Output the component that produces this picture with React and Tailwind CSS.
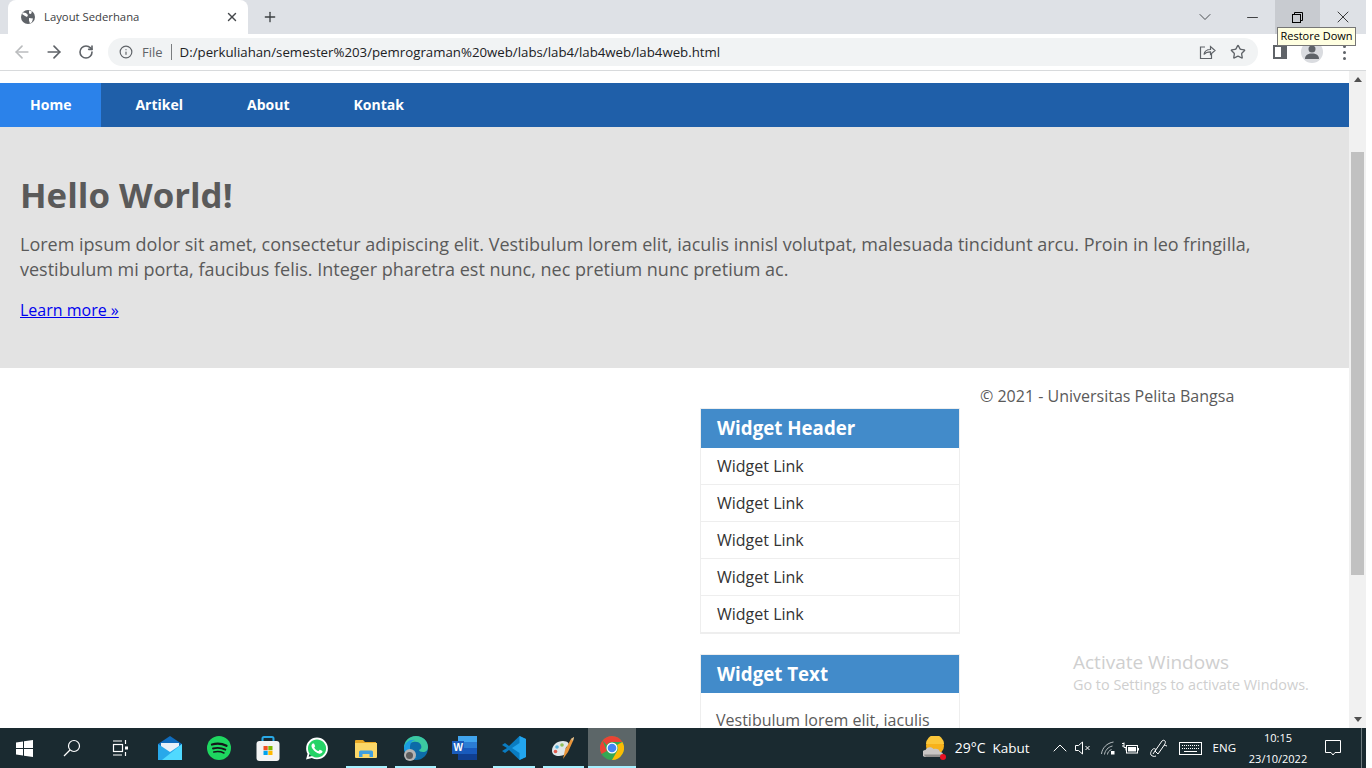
import { ArrowLeft, ArrowRight, ChevronDown, ChevronUp, Info, Minus, Plus, RotateCw, Star, X } from 'lucide-react';
import { FaWhatsapp } from 'react-icons/fa';

const openSans = "font-['Open_Sans',sans-serif]";

function Globe() {
  return (
    <svg width="16" height="16" viewBox="0 0 16 16">
      <circle cx="8" cy="8" r="7" fill="#5f6368" />
      <path d="M3 3.5l3 .5 2 2-1 2-2-1-3-2zM9 1.5l3 1-1 2.5-2-.5zM9 9l4 .5-1 3.5-2 1.5-1-3z" fill="#fff" />
    </svg>
  );
}

function Share() {
  return (
    <svg width="18" height="18" viewBox="0 0 18 18" fill="none" stroke="#5f6368" strokeWidth="1.2">
      <path d="M7 4H2.5v11.5h11V11" />
      <path d="M6 11.5c.5-3.5 3-5 6.5-5V3.5L17 7.5l-4.5 4V8.8c-3 0-5 .7-6.5 2.7z" />
    </svg>
  );
}

function WinLogo() {
  return (
    <svg width="17" height="17" viewBox="0 0 17 17" fill="#fff">
      <path d="M0 2.5l7-1V8H0zM8 1.3L17 0v8H8zM0 9h7v6.5l-7-1zM8 9h9v8l-9-1.3z" />
    </svg>
  );
}

function SearchIcon() {
  return (
    <svg width="18" height="18" viewBox="0 0 18 18" fill="none" stroke="#fff" strokeWidth="1.2">
      <circle cx="11" cy="7" r="5.5" />
      <path d="M7 11l-6 6" />
    </svg>
  );
}

function TaskView() {
  return (
    <svg width="17" height="16" viewBox="0 0 17 16" fill="none" stroke="#fff" strokeWidth="1.2">
      <path d="M1 1h9M1 15h9M13.5 0v4M13.5 12v4" />
      <rect x="1.5" y="4.5" width="9" height="7" />
      <rect x="13" y="6.5" width="3" height="3" fill="#fff" stroke="none" />
    </svg>
  );
}

function Mail() {
  return (
    <svg width="24" height="24" viewBox="0 0 24 24">
      <path d="M0 8L12 0l12 8v16H0z" fill="#0f6cbd" />
      <path d="M3 7h18v8l-9 5-9-5z" fill="#e8f1f8" />
      <path d="M0 8l12 8 12-8v16H0z" fill="#28a8ea" />
      <path d="M24 8v16H4z" fill="#50d9ff" />
    </svg>
  );
}

function Spotify() {
  return (
    <svg width="24" height="24" viewBox="0 0 24 24" fill="none" stroke="#14171a" strokeLinecap="round">
      <circle cx="12" cy="12" r="12" fill="#1ed760" stroke="none" />
      <path d="M5 8.5c5-1.4 10-1 14.5 1.3" strokeWidth="2.3" />
      <path d="M6 12.5c4.5-1.1 8.5-.7 12.3 1.2" strokeWidth="1.9" />
      <path d="M6.8 16c3.7-.8 7-.5 10.2 1" strokeWidth="1.5" />
    </svg>
  );
}

function Store() {
  return (
    <svg width="24" height="25" viewBox="0 0 24 25">
      <path d="M6.5 6V2.5A1.5 1.5 0 0 1 8 1h8a1.5 1.5 0 0 1 1.5 1.5V6" fill="none" stroke="#29a9e6" strokeWidth="2" />
      <rect x="0.5" y="5" width="23" height="20" rx="3" fill="#f4f4f4" />
      <rect x="7.5" y="10" width="4.2" height="4.2" fill="#f25022" />
      <rect x="12.3" y="10" width="4.2" height="4.2" fill="#7fba00" />
      <rect x="7.5" y="14.8" width="4.2" height="4.2" fill="#00a4ef" />
      <rect x="12.3" y="14.8" width="4.2" height="4.2" fill="#ffb900" />
    </svg>
  );
}

function Whatsapp() {
  return (
    <span className="relative flex h-6 w-6 items-center justify-center">
      <span className="absolute inset-[2px] rounded-full bg-[#25d366]" />
      <FaWhatsapp className="relative text-white" size={25} />
    </span>
  );
}

function Explorer() {
  return (
    <svg width="22" height="19" viewBox="0 0 22 19">
      <path d="M0 2a1 1 0 0 1 1-1h7l2 2h11v4H0z" fill="#e8a825" />
      <path d="M0 4h22v14a1 1 0 0 1-1 1H1a1 1 0 0 1-1-1z" fill="#fbd768" />
      <path d="M4 18v-5a1.5 1.5 0 0 1 1.5-1.5h11A1.5 1.5 0 0 1 18 13v5h-3.5v-3h-7v3z" fill="#3f9fe0" />
    </svg>
  );
}

function Edge() {
  return (
    <span className="relative block h-6 w-6">
      <svg width="24" height="24" viewBox="0 0 24 24">
        <circle cx="12" cy="12" r="12" fill="#0d6ba8" />
        <path d="M0 12C0 5 5 0 12 0c7 0 12 5 12 11 0 3-2 5-5 5-2 0-4-1-4-2 2-1 3-2 2-5-1-3-5-4-8-3-4 1-7 3-9 6z" fill="#3cc9a0" />
        <path d="M0 12C1 6 6 3 11 4c-4 1-5 4-5 8 0 4 3 8 7 10-7 2-13-4-13-10z" fill="#1b9de2" />
      </svg>
      <span className="absolute bottom-[-1px] left-0 flex h-[12px] w-[12px] items-center justify-center rounded-full bg-[#b4b4b4]">
        <span className="h-[7px] w-[7px] rounded-full bg-[#5d5d5d]" />
      </span>
    </span>
  );
}

function Word() {
  return (
    <span className="relative block h-6 w-[25px]">
      <svg width="25" height="24" viewBox="0 0 25 24">
        <rect x="6" y="0" width="19" height="6" fill="#41a5ee" />
        <rect x="6" y="6" width="19" height="6" fill="#2b7cd3" />
        <rect x="6" y="12" width="19" height="6" fill="#185abd" />
        <rect x="6" y="18" width="19" height="6" fill="#103f91" />
        <rect x="0" y="5" width="12" height="13" fill="#1a5cbc" />
      </svg>
      <span className="absolute left-0 top-[5px] flex h-[13px] w-3 items-center justify-center font-['Liberation_Sans',sans-serif] text-[10px] leading-none font-bold text-white">W</span>
    </span>
  );
}

function VsCode() {
  return (
    <svg width="24" height="24" viewBox="0 0 24 24">
      <path d="M17.5 0L24 3v18l-6.5 3L7 14l-4 3-3-2 5-3-5-3 3-2 4 3z" fill="#0a7cc1" />
      <path d="M17.5 0L24 3v18l-6.5 3V17L10 12l7.5-5z" fill="#22a5ee" />
    </svg>
  );
}

function Palette() {
  return (
    <svg width="24" height="24" viewBox="0 0 24 24">
      <path d="M1 15c0-6 5-10 11-10 5 0 7 3 5 5-2 1-3 2-2 4 1 3-2 6-7 6-4 0-7-2-7-5z" fill="#dfe7ea" />
      <circle cx="6" cy="11" r="1.8" fill="#57b4e0" />
      <circle cx="11" cy="9" r="1.8" fill="#8fc05a" />
      <circle cx="4.5" cy="15.5" r="1.8" fill="#e25c4e" />
      <path d="M12 23l2-9 6-11 3-2-1 4-5 11z" fill="#e8953a" />
      <path d="M20 3l3-2-1 4z" fill="#d9c39a" />
    </svg>
  );
}

function Chrome() {
  return (
    <svg width="24" height="24" viewBox="0 0 24 24">
      <circle cx="12" cy="12" r="12" fill="#34a853" />
      <path d="M12 0a12 12 0 0 1 10.4 6H12a6 6 0 0 0-5.2 3L2.6 4.6A12 12 0 0 1 12 0z" fill="#ea4335" />
      <path d="M2.6 4.6A12 12 0 0 0 1.6 18L6.8 15z" fill="#ea4335" />
      <path d="M22.4 6A12 12 0 0 1 12 24l5.2-9A6 6 0 0 0 17 9z" fill="#fbbc04" />
      <circle cx="12" cy="12" r="5.5" fill="#fff" />
      <circle cx="12" cy="12" r="4.3" fill="#4285f4" />
    </svg>
  );
}

function Weather() {
  return (
    <svg width="24" height="24" viewBox="0 0 24 24">
      <circle cx="12" cy="10" r="9" fill="#f7b21b" />
      <path d="M3 8a9 9 0 0 1 18 0z" fill="#fbc73a" />
      <path d="M3 21a3.5 3.5 0 0 1-.5-7c1-3 6-4 8-1 3-1 6 0 6.5 3 2 0 3 1 3 2.5 0 1.500-1 2.500-3 2.500z" fill="#c9c6c4" />
      <path d="M3 21a3.5 3.5 0 0 1-2-2.5h19c0 1.500-1 2.500-3 2.500z" fill="#8f8d8c" />
      <circle cx="20" cy="21" r="3" fill="#e81123" />
    </svg>
  );
}

function Speaker() {
  return (
    <svg width="16" height="14" viewBox="0 0 16 14" fill="none" stroke="#fff" strokeWidth="1">
      <path d="M.5 4.5h3L7.5 1v12l-4-3.5h-3z" />
      <path d="M10.5 5l4 4M14.5 5l-4 4" />
    </svg>
  );
}

function Wifi() {
  return (
    <svg width="14" height="14" viewBox="0 0 14 14" fill="none" stroke="#b8bfc2" strokeWidth="1">
      <path d="M.5 13C1 7 6 2 12.5 1" />
      <path d="M3.5 13.5C4 9.5 7 6 11.5 5" />
      <path d="M6.5 13.5c0-2 1.500-4 4-5" />
      <rect x="10" y="10" width="3.5" height="3.5" fill="#fff" stroke="none" />
    </svg>
  );
}

function Battery() {
  return (
    <svg width="17" height="12" viewBox="0 0 17 12" fill="none" stroke="#fff">
      <path d="M0 1.5h2M0 4h2M2 .5v5h2v3" />
      <rect x="4.5" y="3.5" width="11" height="7.5" />
      <rect x="6" y="5" width="8" height="4.5" fill="#fff" stroke="none" />
      <path d="M16.5 6v2.5" />
    </svg>
  );
}

function Pen() {
  return (
    <svg width="18" height="18" viewBox="0 0 18 18" fill="none" stroke="#fff" strokeWidth="1">
      <path d="M6 17c-2 1-4 0-5-1-1-2 0-3 1-5 1-1 2-2 3-1 1 0 1 1 0 2l-2 3" />
      <path d="M5 12l7-10c1-1 2-1 3 0 1 1 0 2 0 3L8 15z" />
      <path d="M14 6c1 0 2 1 3 1" />
    </svg>
  );
}

function Keyboard() {
  return (
    <svg width="23" height="13" viewBox="0 0 23 13" fill="none" stroke="#fff">
      <rect x=".5" y=".5" width="22" height="12" />
      <path d="M3 3.5h17M3 6.5h17" strokeDasharray="1 1" />
      <path d="M5 9.5h13" />
    </svg>
  );
}

function Notice() {
  return (
    <svg width="16" height="16" viewBox="0 0 16 16" fill="none" stroke="#fff">
      <path d="M.5 .5h15v12H10l-2 2.5L6 12.5H.5z" />
    </svg>
  );
}

function TabStrip() {
  return (
    <div className="relative flex h-[34px] items-center bg-[#dee1e6]">
      <div className="ml-2 flex h-[34px] w-[240px] items-center rounded-t-lg bg-white pr-[9px] pl-3">
        <Globe />
        <span className="ml-2 flex-1 text-[11.3px] text-[#3c4043]">Layout Sederhana</span>
        <X size={14} strokeWidth={2.4} className="text-[#45484c]" />
      </div>
      <Plus size={16} strokeWidth={2} className="ml-[14px] text-[#3c4043]" />
      <div className="ml-auto flex h-[34px] items-center">
        <ChevronDown size={20} strokeWidth={1.1} className="mr-[14px] text-[#3c4043]" />
        <div className="flex h-[34px] w-[46px] items-center justify-center"><Minus size={17} strokeWidth={1} className="text-black" /></div>
        <div className="flex h-[34px] w-[45px] items-center justify-center bg-[#c8cbd0]">
          <svg width="11" height="11" viewBox="0 0 11 11" fill="none" stroke="#000">
            <path d="M2.5 2.5V.5h8v8H8.5" />
            <rect x=".5" y="2.5" width="8" height="8" />
          </svg>
        </div>
        <div className="flex h-[34px] w-[46px] items-center justify-center"><X size={20} strokeWidth={0.9} className="text-black" /></div>
      </div>
      <div className="absolute top-[27px] left-[1277px] z-10 flex h-[19px] w-[79px] items-center justify-center border border-[#767676] bg-[#ffffe1] text-[11px] whitespace-nowrap text-black">
        Restore Down
      </div>
    </div>
  );
}

function Toolbar() {
  return (
    <div className="flex h-[37px] items-center border-b border-[#d8dadc] bg-white">
      <ArrowLeft size={20} strokeWidth={2} className="ml-3 text-[#babcbe]" />
      <ArrowRight size={20} strokeWidth={2} className="ml-3 text-[#5f6368]" />
      <RotateCw size={16} strokeWidth={2.4} className="ml-[14px] text-[#5f6368]" />
      <div className="ml-[14px] flex h-7 w-[1150px] items-center rounded-full bg-[#f1f3f4] pr-3 pl-[11px]">
        <Info size={14} strokeWidth={2} className="text-[#5f6368]" />
        <span className="ml-[9px] pt-px text-[13px] text-[#5f6368]">File</span>
        <span className="mx-2 h-[16px] w-px bg-[#7a7d80]" />
        <span className="pt-px text-[13.25px] text-[#202124]">D:/perkuliahan/semester%203/pemrograman%20web/labs/lab4/lab4web/lab4web.html</span>
        <div className="ml-auto flex items-center gap-[14px]">
          <Share />
          <Star size={16} strokeWidth={2} className="text-[#5f6368]" />
        </div>
      </div>
      <div className="ml-[15px] flex h-[14px] w-[14px] justify-end border-2 border-[#5f6368] bg-white">
        <span className="h-full w-[4px] bg-[#5f6368]" />
      </div>
      <div className="ml-[14px] flex h-[22px] w-[22px] items-center justify-center overflow-hidden rounded-full bg-[#dadce0]">
        <svg width="14" height="14" viewBox="0 0 14 14" fill="#5f6368">
          <circle cx="7" cy="4" r="3.5" />
          <path d="M0 14c0-4 3-5.5 7-5.5s7 1.500 7 5.500z" />
        </svg>
      </div>
      <div className="ml-5 flex flex-col gap-[3px]">
        <span className="h-[3px] w-[3px] rounded-full bg-[#5f6368]" />
        <span className="h-[3px] w-[3px] rounded-full bg-[#5f6368]" />
        <span className="h-[3px] w-[3px] rounded-full bg-[#5f6368]" />
      </div>
    </div>
  );
}

function NavBar() {
  return (
    <nav className="mt-3 flex h-11 gap-1 bg-[#1f5fa9] text-sm font-bold text-white">
      <a className="flex items-center bg-[#2b82ea] px-[30px]">Home</a>
      <a className="flex items-center px-[30px]">Artikel</a>
      <a className="flex items-center px-[30px]">About</a>
      <a className="flex items-center px-[30px]">Kontak</a>
    </nav>
  );
}

function Hero() {
  return (
    <section className="h-[241px] bg-[#e3e3e3] px-5 pt-[45px] text-[#5a5a5a]">
      <h1 className="text-[34.8px] leading-[46px] font-bold">Hello World!</h1>
      <p className="mt-[14px] text-lg leading-[25px]">
        Lorem ipsum dolor sit amet, consectetur adipiscing elit. Vestibulum lorem elit, iaculis innisl volutpat, malesuada tincidunt arcu. Proin in leo fringilla, vestibulum mi porta, faucibus felis. Integer pharetra est nunc, nec pretium nunc pretium ac.
      </p>
      <a className="mt-[16px] block text-base leading-6 text-[#0000ee] underline">Learn more »</a>
    </section>
  );
}

function Widgets() {
  return (
    <aside className="ml-[700px] w-[260px] pt-10">
      <div className="border border-b-2 border-[#eeeeee]">
        <h3 className="h-[39px] bg-[#428bca] px-4 text-[18.72px] leading-[38px] font-bold text-white">Widget Header</h3>
        {[0, 1, 2, 3, 4].map((i) => (
          <div key={i} className="h-[37px] border-b border-[#eeeeee] px-4 text-base leading-9 text-[#333333] last:h-9 last:border-b-0">
            Widget Link
          </div>
        ))}
      </div>
      <div className="mt-[20px] border border-[#eeeeee]">
        <h3 className="h-[38px] bg-[#428bca] px-4 text-[18.72px] leading-[37px] font-bold text-white">Widget Text</h3>
        <p className="px-[15px] pt-[15px] text-base leading-6 text-[#5a5a5a]">Vestibulum lorem elit, iaculis</p>
      </div>
    </aside>
  );
}

function Page() {
  return (
    <div className="relative flex h-[657px] overflow-hidden bg-white">
      <main className={`w-[1349px] ${openSans}`}>
        <NavBar />
        <Hero />
        <div className="flex">
          <Widgets />
          <p className="ml-5 pt-4 text-base leading-6 text-[#5a5a5a]">© 2021 - Universitas Pelita Bangsa</p>
        </div>
      </main>
      <div className="flex w-[17px] flex-col items-center bg-[#f1f1f1]">
        <div className="mt-[6px] h-0 w-0 border-x-[4px] border-b-[5px] border-x-transparent border-b-[#505050]" />
        <div className="mt-[70px] h-[423px] w-[13px] bg-[#c1c1c1]" />
        <div className="mt-auto mb-[6px] h-0 w-0 border-x-[4px] border-t-[5px] border-x-transparent border-t-[#505050]" />
      </div>
      <div className="absolute top-[579px] left-[1073px] text-[#cfcfcf]">
        <div className="text-[19px] leading-6">Activate Windows</div>
        <div className="mt-[1px] text-[14.4px] leading-5">Go to Settings to activate Windows.</div>
      </div>
    </div>
  );
}

function Slot({ w = 49.2, on, active, children }) {
  return (
    <div className={`relative flex h-10 items-center justify-center ${active ? 'bg-[#5c6668]' : ''}`} style={{ width: w }}>
      {children}
      {on && <span className={`absolute bottom-0 h-[2px] bg-[#a6f0ff] ${active ? 'inset-x-0' : 'inset-x-1'}`} />}
    </div>
  );
}

function Taskbar() {
  return (
    <div className={`flex h-10 items-center bg-[#1a2a30] text-white ${openSans}`}>
      <Slot w={48}><WinLogo /></Slot>
      <Slot w={48}><SearchIcon /></Slot>
      <Slot w={49}><TaskView /></Slot>
      <Slot><Mail /></Slot>
      <Slot><Spotify /></Slot>
      <Slot><Store /></Slot>
      <Slot><Whatsapp /></Slot>
      <Slot on><Explorer /></Slot>
      <Slot on><Edge /></Slot>
      <Slot><Word /></Slot>
      <Slot on><VsCode /></Slot>
      <Slot on><Palette /></Slot>
      <Slot w={48} on active><Chrome /></Slot>
      <div className="ml-auto flex h-10 items-center text-[13px]">
        <Weather />
        <span className="ml-[8px] text-sm">29°C</span>
        <span className="ml-[7px] text-[13.5px]">Kabut</span>
        <ChevronUp size={24} strokeWidth={1} className="ml-[18px]" />
        <span className="ml-[3px]"><Speaker /></span>
        <span className="ml-[10px]"><Wifi /></span>
        <span className="ml-[7px]"><Battery /></span>
        <span className="ml-[11px]"><Pen /></span>
        <span className="ml-[11px]"><Keyboard /></span>
        <span className="ml-[11px] text-[11.5px]">ENG</span>
        <div className="ml-[9px] flex w-[66px] flex-col items-center text-[11px] leading-[21px]">
          <span>10:15</span>
          <span>23/10/2022</span>
        </div>
        <span className="ml-[14px]"><Notice /></span>
        <span className="ml-5 h-10 w-px bg-[#6d7a7e]" />
        <span className="w-[4px]" />
      </div>
    </div>
  );
}

export default function App() {
  return (
    <div className={`h-[768px] w-[1366px] overflow-hidden ${openSans}`}>
      <TabStrip />
      <Toolbar />
      <Page />
      <Taskbar />
    </div>
  );
}
